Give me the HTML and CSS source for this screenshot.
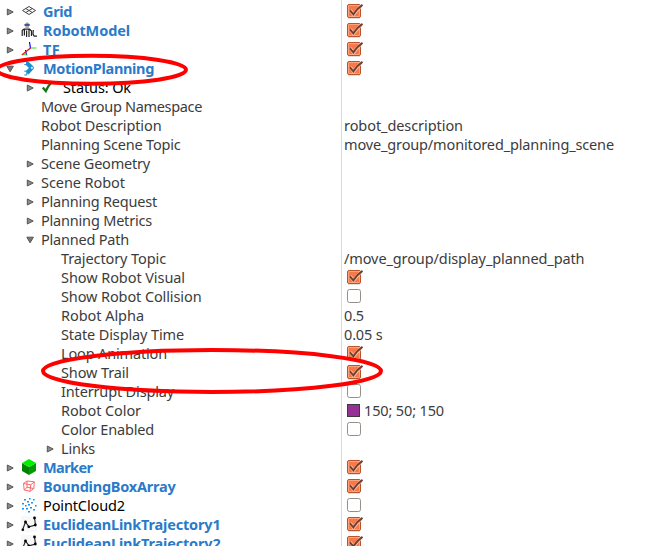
FILE: index.html
```
<!DOCTYPE html>
<html lang="en">
<head>
<meta charset="utf-8">
<title>Displays</title>
<link rel="stylesheet" href="styles.css">
</head>
<body>
<svg class="defs" width="0" height="0">
  <symbol id="closed" viewBox="0 0 8 8"><path d="M1.3 1L7.2 4L1.3 7Z" fill="#8a8a8a" stroke="#555"/></symbol>
  <symbol id="open" viewBox="0 0 8 8"><path d="M.8 1.2H7.4L4.1 6.8Z" fill="#777" stroke="#555"/></symbol>
  <symbol id="checked" viewBox="0 0 17 16"><path d="M2 15.4H14" stroke="#ddd"/><rect x="1.5" y="1.5" width="13" height="13" rx="1.5" fill="#f8784a" stroke="#b8532c"/><rect x="2.5" y="2.5" width="11" height="11" rx=".5" fill="none" stroke="#ffa37c"/><path d="M4.2 7.2L7.5 11.5L15 2.8" fill="none" stroke="#ffc3a8" stroke-width="3.2"/><path d="M3.9 7.4L7.4 11.3Q11 5.5 16.5 1.8" fill="none" stroke="#70402f" stroke-width="2"/></symbol>
  <symbol id="unchecked" viewBox="0 0 17 16"><rect x="1.5" y="1.5" width="13" height="13" rx="2" fill="#fff" stroke="#949089"/></symbol>
  <symbol id="grid" viewBox="0 0 16 16"><path d="M1.5 7.5L8 3.5L14.5 7.5L8 11.5ZM4.7 5.5L11.3 9.5M11.3 5.5L4.7 9.5" fill="none" stroke="#444" stroke-width="1"/></symbol>
  <symbol id="robot" viewBox="0 0 16 16"><path d="M4 2.5Q6 -1 8.5 2.5" fill="#aab" stroke="#889" stroke-width=".7"/><path d="M3.5 3H8.7" stroke="#1d3e9b" stroke-width="1.7"/><path d="M4.3 5H8" stroke="#777" stroke-width="1.2"/><path d="M1.2 14V8.5L3 7M3.4 7V13.5M5.6 8.5V15M8 7V15M3 7.2H8.5L10.5 9V14M12.3 8L12 12L13.2 14.2H16" fill="none" stroke="#222" stroke-width="1.2"/></symbol>
  <symbol id="tf" viewBox="0 0 16 16"><path d="M9.5 7.5L8.5 1M5.5 14L4.5 9" stroke="#00f" stroke-width="1.2"/><path d="M9.5 7H15.5M1.5 13.5L6.5 14" stroke="#2de02d" stroke-width="1.2"/><path d="M.8 14L9.5 7" fill="none" stroke="#f21818" stroke-width="1.4"/></symbol>
  <symbol id="motion" viewBox="0 0 16 16"><path d="M5.5 2.8L10.8 7.8L6 13" fill="none" stroke="#1b8fce" stroke-width="4.2" stroke-linejoin="round"/><path d="M3.3 1H5.6V4.6H3.3M3.3 11.2H5.8V15H3.3" fill="#fff" stroke="#1b8fce"/><circle cx="10.9" cy="7.8" r="1.1" fill="#d8effb"/></symbol>
  <symbol id="ok" viewBox="0 0 16 16"><path d="M1.8 8.5L4.8 12Q7 7 10.8 3" fill="none" stroke="#167316" stroke-width="2.3"/></symbol>
  <symbol id="marker" viewBox="0 0 16 16"><path d="M1 4L8 8V16L1 12Z" fill="#008000"/><path d="M15 4L8 8V16L15 12Z" fill="#009c00"/><path d="M8 0L15 4L8 8L1 4Z" fill="#00ef00"/></symbol>
  <symbol id="box" viewBox="0 0 16 16"><path d="M2.5 5.5L9.8 6.8L9 13.3L3.2 12ZM2.5 5.5L6 3L13.3 3.8L9.8 6.8M13.3 3.8L12.8 10.5L9 13.3M6 3V9.3L12.8 10.5M6 9.3L3.2 12" fill="none" stroke="#ff5a5e" stroke-width=".9"/></symbol>
  <symbol id="cloud" viewBox="0 0 16 16"><path d="M3 2h2v1.6h-2zM8 1h1.6v1.6h-1.6zM12 2h1.6v1.6h-1.6zM6 4h2v1.6h-2zM1 6h2v1.6h-2zM10 5h2v1.6h-2zM14 8h1.6v1.6h-1.6zM4 8h1.6v1.6h-1.6zM7 7h2v1.6h-2zM1 11h2v1.6h-2zM5 11h2v1.6h-2zM9 10h2v1.6h-2zM12 12h2v1.6h-2zM7 14h2v1.6h-2z" fill="#1890f0"/></symbol>
  <symbol id="link" viewBox="0 0 16 16"><rect width="16" height="16" fill="#f8f8f8"/><path d="M1.5 14L4.5 6L8 10.8L14.5 9L13.5 1.7" fill="none" stroke="#222" stroke-width="1.1"/><circle cx="1.8" cy="13.8" r="1.3"/><circle cx="4.5" cy="6" r="1.4"/><circle cx="7.8" cy="10.8" r="1.4"/><circle cx="14.3" cy="9" r="1.4"/><circle cx="13.5" cy="2" r="1.4"/></symbol>
</svg>
<main class="tree" id="tree"></main>
<svg class="marks" width="647" height="546">
  <ellipse cx="91.5" cy="69.8" rx="94.5" ry="14"/>
  <ellipse cx="212" cy="371" rx="169" ry="21"/>
</svg>
<script src="tree.js"></script>
</body>
</html>
```
FILE: tree.js
```
// level, arrow, icon, label, label width, value, value width, style
const rows = [
  [0, 'closed', 'grid', 'Grid', 29, true, 0, 'display'],
  [0, 'closed', 'robot', 'RobotModel', 87, true, 0, 'display'],
  [0, 'closed', 'tf', 'TF', 17, true, 0, 'display'],
  [0, 'open', 'motion', 'MotionPlanning', 111, true, 0, 'display'],
  [1, 'closed', 'ok', 'Status: Ok', 68, null, 0, 'plain'],
  [1, '', '', 'Move Group Namespace', 161],
  [1, '', '', 'Robot Description', 120.5, 'robot_description', 119],
  [1, '', '', 'Planning Scene Topic', 139.5, 'move_group/monitored_planning_scene', 270],
  [1, 'closed', '', 'Scene Geometry', 109],
  [1, 'closed', '', 'Scene Robot', 84],
  [1, 'closed', '', 'Planning Request', 116],
  [1, 'closed', '', 'Planning Metrics', 111],
  [1, 'open', '', 'Planned Path', 88],
  [2, '', '', 'Trajectory Topic', 105, '/move_group/display_planned_path', 240.5],
  [2, '', '', 'Show Robot Visual', 124, true],
  [2, '', '', 'Show Robot Collision', 140.5, false],
  [2, '', '', 'Robot Alpha', 83, '0.5', 20],
  [2, '', '', 'State Display Time', 123, '0.05 s', 38.5],
  [2, '', '', 'Loop Animation', 106, true],
  [2, '', '', 'Show Trail', 68, true],
  [2, '', '', 'Interrupt Display', 113, false],
  [2, '', '', 'Robot Color', 80, '150; 50; 150', 80, 'swatched'],
  [2, '', '', 'Color Enabled', 93, false],
  [2, 'closed', '', 'Links', 34],
  [0, 'closed', 'marker', 'Marker', 49.5, true, 0, 'display'],
  [0, 'closed', 'box', 'BoundingBoxArray', 132.5, true, 0, 'display'],
  [0, 'closed', 'cloud', 'PointCloud2', 82, false, 0, 'plain'],
  [0, 'closed', 'link', 'EuclideanLinkTrajectory1', 177.5, true, 0, 'display'],
  [0, 'closed', 'link', 'EuclideanLinkTrajectory2', 177.5, true, 0, 'display'],
];

const use = (id, cls) => `<svg class="${cls}"><use href="#${id}"/></svg>`;
const text = (s, w) => `<span class="text" data-width="${w}">${s}</span>`;

document.getElementById('tree').innerHTML = rows.map(([level, arrow, icon, label, w, value, vw, style = '']) => {
  let cell = '';
  if (typeof value === 'boolean') cell = use(value ? 'checked' : 'unchecked', 'check');
  else if (value) cell = (style === 'swatched' ? '<i class="swatch"></i>' : '') + text(value, vw);
  return `<div class="row ${style}"><div class="name level-${level}">` +
    (arrow ? use(arrow, 'arrow') : '<i class="arrow"></i>') +
    (icon ? use(icon, 'icon') : '') + text(label, w) +
    `</div><div class="value">${cell}</div></div>`;
}).join('');

// Spread the letters so that each text fills its own width.
for (const el of document.querySelectorAll('.text')) {
  const gap = (el.dataset.width - el.getBoundingClientRect().width) / el.textContent.length;
  el.style.letterSpacing = gap.toFixed(3) + 'px';
}
```
FILE: styles.css
```
body { margin: 0; width: 647px; height: 546px; overflow: hidden; position: relative; background: #fff; color: #3c3c3c; font: 14.5px/19px "Noto Sans", "Open Sans", sans-serif; }
.defs { position: absolute; }
.tree { padding-top: 2px; height: 544px; overflow: hidden; background: linear-gradient(#d9d9d9, #d9d9d9) 341px 0 / 1px 100% no-repeat; }
.row { display: flex; height: 19px; }
.name { display: flex; width: 342px; box-sizing: border-box; padding-left: 6px; }
.level-1 { padding-left: 26px; }
.level-2 { padding-left: 46px; }
.arrow { flex: none; width: 8px; height: 8px; margin: 5.5px 7px 0 0; }
.icon { flex: none; width: 16px; height: 16px; margin: 1px 6px 0 0; }
.text { white-space: pre; height: 19px; }
.value { display: flex; padding-left: 2px; }
.check { width: 17px; height: 16px; margin: 1px 0 0 2px; }
.swatch { width: 11px; height: 11px; margin: 3px 4px 0 3px; background: #963296; border: 1px solid #3c3c3c; }
.display .name { color: #2a7ac9; font-weight: 700; }
.plain .name { color: #000; }
.marks { position: absolute; left: 0; top: 0; }
.marks ellipse { fill: none; stroke: #f00; stroke-width: 4; }
```
